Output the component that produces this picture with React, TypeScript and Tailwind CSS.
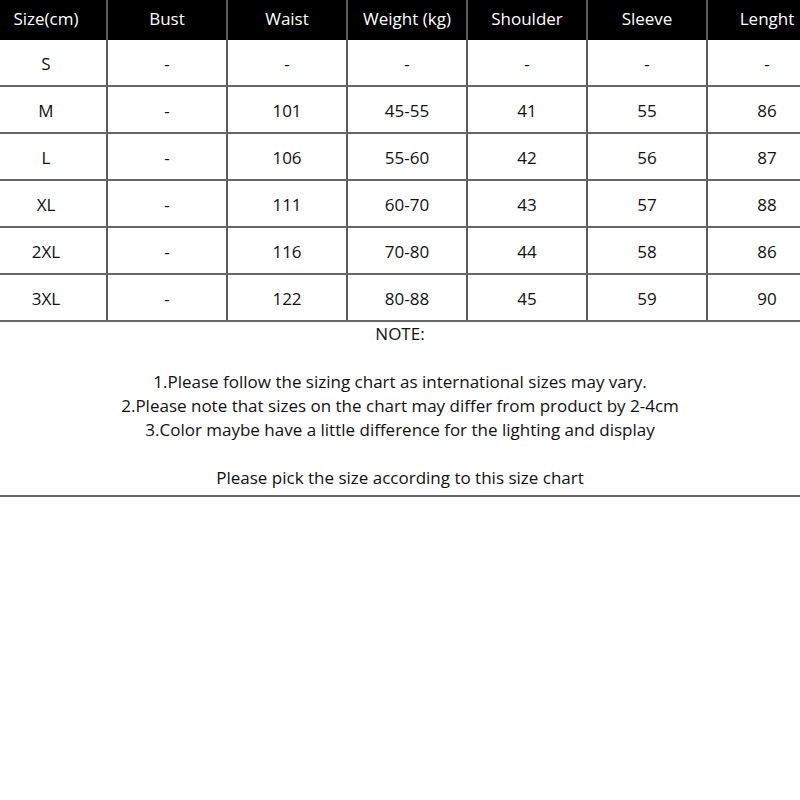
import React from "react";

const headers = ["Size(cm)", "Bust", "Waist", "Weight (kg)", "Shoulder", "Sleeve", "Lenght"];

const rows: string[][] = [
  ["S", "-", "-", "-", "-", "-", "-"],
  ["M", "-", "101", "45-55", "41", "55", "86"],
  ["L", "-", "106", "55-60", "42", "56", "87"],
  ["XL", "-", "111", "60-70", "43", "57", "88"],
  ["2XL", "-", "116", "70-80", "44", "58", "86"],
  ["3XL", "-", "122", "80-88", "45", "59", "90"],
];

const App: React.FC = () => {
  return (
    <div className="w-[800px] h-[800px] bg-white overflow-hidden font-['Open_Sans',sans-serif] text-[17px] text-[#111]">
      <div className="w-[840px] -ml-[14px]">
        <div className="grid grid-cols-[120px_repeat(6,120px)] h-[40px] bg-black text-white">
          {headers.map((h, i) => (
            <div
              key={h}
              className={`flex items-center justify-center pb-[3px] ${i > 0 ? "border-l-2 border-[#5a5a5a]" : ""}`}
            >
              {h}
            </div>
          ))}
        </div>
        {rows.map((r) => (
          <div key={r[0]} className="grid grid-cols-[120px_repeat(6,120px)] h-[47px] border-b-2 border-[#666]">
            {r.map((c, i) => (
              <div
                key={i}
                className={`flex items-center justify-center pt-[2px] ${i > 0 ? "border-l-2 border-[#5a5a5a]" : ""}`}
              >
                {c}
              </div>
            ))}
          </div>
        ))}
      </div>
      <div className="flex flex-col items-center leading-[24px] pb-[5px] border-b-2 border-[#666]">
        <p>NOTE:</p>
        <p>&nbsp;</p>
        <p>1.Please follow the sizing chart as international sizes may vary.</p>
        <p>2.Please note that sizes on the chart may differ from product by 2-4cm</p>
        <p>3.Color maybe have a little difference for the lighting and display</p>
        <p>&nbsp;</p>
        <p>Please pick the size according to this size chart</p>
      </div>
    </div>
  );
};

export default App;
